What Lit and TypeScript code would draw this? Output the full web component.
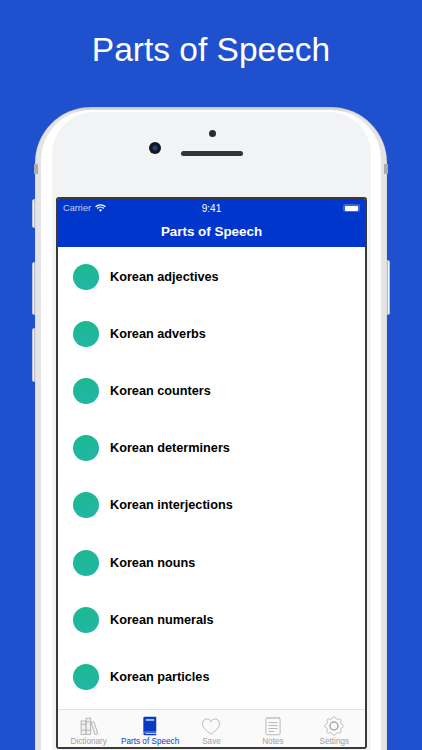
import { LitElement, html, css, svg } from "lit";
import { customElement } from "lit/decorators.js";

const ITEMS = ["adjectives", "adverbs", "counters", "determiners", "interjections", "nouns", "numerals", "particles"];

function gearPath(): string {
  const pts: string[] = [];
  for (let i = 0; i < 96; i++) {
    const a = (i / 96) * Math.PI * 2;
    const r = 10 + 1.3 * Math.cos(8 * a);
    pts.push(`${(12 + r * Math.cos(a)).toFixed(2)} ${(12 + r * Math.sin(a)).toFixed(2)}`);
  }
  return `M${pts.join("L")}z`;
}

const icons = {
  dict: svg`<g fill="#f1f1f1" stroke="#a9a9a9" stroke-width="1"><rect x="2.5" y="6" width="6" height="16"/><rect x="8.5" y="2.5" width="5.5" height="19.5"/><path d="M2.5 10h6M2.5 17h6M8.5 7h5.5M8.5 17h5.5"/><path d="M14.5 8l3.5-1 4.5 14-3.5 1.2z"/></g>`,
  book: svg`<path d="M4 2.5a1.5 1.5 0 0 1 1.5-1.5H19.5v18H6a2 2 0 0 0-2 1z" fill="#0a3ac4"/><rect x="7" y="4" width="10" height="1.5" fill="#fff"/><path d="M4 21c0-.9.9-1.4 2-1.4h13.5v1.2H6.4v.7h13.1V23H6c-1.2 0-2-.9-2-2z" fill="#0a3ac4"/>`,
  heart: svg`<path d="M12 22C6.5 17.5 1.6 14 1.6 9A5.4 5.4 0 0 1 12 7a5.4 5.4 0 0 1 10.4 2c0 5-4.900 8.500-10.400 13z" fill="none" stroke="#b0b0b0" stroke-width="1"/>`,
  notes: svg`<g fill="none" stroke="#a9a9a9" stroke-width="1"><rect x="3.500" y="2.500" width="17" height="20" rx="1.500"/><path d="M6.500 8h11M6.500 11.500h11M6.500 15h11M6.500 18.500h7"/><path d="M5 1v2M7.500 1v2M10 1v2M12.500 1v2M15 1v2M17.500 1v2M19.500 1v2" stroke-width=".7"/></g>`,
  gear: svg`<g fill="none" stroke="#a9a9a9"><path d="${gearPath()}" stroke-width=".9"/><circle cx="12" cy="12" r="4.800" stroke-width="1.800"/></g>`,
};

const TABS = [
  { label: "Dictionary", icon: icons.dict },
  { label: "Parts of Speech", icon: icons.book, active: true },
  { label: "Save", icon: icons.heart },
  { label: "Notes", icon: icons.notes },
  { label: "Settings", icon: icons.gear },
];

@customElement("app-root")
export class AppRoot extends LitElement {
  static styles = css`
    :host {
      display: block;
      width: 422px;
      height: 750px;
      overflow: hidden;
      background: #1f50ce;
      font-family: "Liberation Sans", Arial, sans-serif;
    }
    .headline {
      height: 107px;
      box-sizing: border-box;
      padding-top: 30px;
      margin: 0;
      text-align: center;
      color: #fff;
      font-size: 33.5px;
      line-height: 40px;
      font-weight: 400;
    }
    .phone {
      position: relative;
      width: 352px;
      height: 660px;
      margin-left: 35px;
      box-sizing: border-box;
      padding: 3px 6px 0;
      border-radius: 56px 56px 0 0;
      background: linear-gradient(#c9c9cc, #e4e4e7 5px);
      box-shadow: inset 0 0 1px #8f8f93;
    }
    .band {
      position: absolute;
      top: 57px;
      width: 4px;
      height: 10px;
      background: #a9abae;
    }
    .band.l { left: -1px; }
    .band.r { right: -1px; }
    .key {
      position: absolute;
      width: 3px;
      box-sizing: border-box;
      background: #f2f3f5;
      border: 1px solid #b9bfcf;
      border-radius: 2px 0 0 2px;
    }
    .key.mute { left: -3px; top: 92px; height: 29px; }
    .key.up { left: -3px; top: 155px; height: 53px; }
    .key.down { left: -3px; top: 221px; height: 54px; }
    .key.power { right: -3px; top: 153px; height: 55px; border-radius: 0 2px 2px 0; }
    .rim {
      height: 100%;
      box-sizing: border-box;
      padding: 2px 10px 0 11px;
      border-radius: 50px 50px 0 0;
      background: #fff;
    }
    .glass {
      height: 100%;
      box-sizing: border-box;
      padding: 0 3px 0 4px;
      border-radius: 42px 42px 0 0;
      background: #f2f3f5;
    }
    .face {
      height: 85px;
      position: relative;
      display: flex;
      flex-direction: column;
      align-items: center;
    }
    .sensor {
      width: 7px;
      height: 7px;
      border-radius: 50%;
      background: #2a2a2c;
      margin-top: 18px;
    }
    .speaker {
      width: 62px;
      height: 5px;
      margin-top: 14px;
      border-radius: 3px;
      background: #333436;
    }
    .camera {
      position: absolute;
      left: 93px;
      top: 30px;
      width: 12px;
      height: 12px;
      border-radius: 50%;
      background: radial-gradient(circle, #1d3f8c 0 2px, #14161c 3px);
    }
    .screen {
      width: 311px;
      height: 552px;
      box-sizing: border-box;
      border: 2px solid #3a3a3c;
      border-radius: 3px;
      background: #fff;
      display: flex;
      flex-direction: column;
      overflow: hidden;
    }
    .nav {
      height: 48px;
      flex: none;
      background: #0036cc;
      color: #fff;
    }
    .status {
      height: 18px;
      display: grid;
      grid-template-columns: 1fr auto 1fr;
      align-items: center;
      padding: 0 5px;
      font-size: 9.2px;
    }
    .carrier {
      display: flex;
      align-items: center;
      gap: 4px;
      color: #c3d0f3;
    }
    .time { font-size: 10px; }
    .battery {
      justify-self: end;
      display: flex;
      align-items: center;
      width: 17px;
      height: 8px;
      box-sizing: border-box;
      padding: 1.500px 2px;
      border-radius: 2px;
      background: #3f66d8;
    }
    .battery i { display: block; width: 100%; height: 100%; background: #fff; border-radius: 1px; }
    .title {
      text-align: center;
      font-size: 13.4px;
      font-weight: 700;
      line-height: 20px;
      margin-top: 5px;
    }
    .list {
      flex: 1;
      min-height: 0;
      overflow: hidden;
      padding-top: 1px;
    }
    .row {
      height: 57.2px;
      display: flex;
      align-items: center;
      gap: 11px;
      padding-left: 15px;
      color: #000;
      font-size: 12.7px;
      font-weight: 700;
    }
    .dot {
      width: 26px;
      height: 26px;
      border-radius: 50%;
      background: linear-gradient(170deg, #1cb98e, #22b5a9);
      flex: none;
    }
    .tabs {
      height: 38px;
      flex: none;
      box-sizing: border-box;
      display: grid;
      grid-template-columns: repeat(5, 1fr);
      background: #fafafa;
      border-top: 1px solid #e3e3e3;
    }
    .tab {
      display: flex;
      flex-direction: column;
      align-items: center;
      justify-content: flex-end;
      gap: 1px;
      color: #a0a0a0;
      font-size: 8.2px;
      padding-bottom: 1px;
      white-space: nowrap;
    }
    .tab.on { color: #0a3ac4; }
    .tab svg { width: 20px; height: 20px; display: block; }
  `;

  render() {
    return html`
      <h1 class="headline">Parts of Speech</h1>
      <div class="phone">
        <span class="band l"></span><span class="band r"></span>
        <span class="key mute"></span><span class="key up"></span>
        <span class="key down"></span><span class="key power"></span>
        <div class="rim">
          <div class="glass">
            <div class="face">
              <span class="sensor"></span>
              <span class="speaker"></span>
              <span class="camera"></span>
            </div>
            <div class="screen">
              <div class="nav">
                <div class="status">
                  <span class="carrier">Carrier
                    <svg width="11" height="8" viewBox="0 0 11 8" fill="none" stroke="#fff" stroke-width="1.300">
                      <path d="M.6 2.800a7 7 0 0 1 9.800 0M2.200 4.500a4.700 4.700 0 0 1 6.600 0"/>
                      <path d="M3.900 6.100a2.300 2.300 0 0 1 3.200 0L5.500 7.800z" fill="#fff" stroke="none"/>
                    </svg>
                  </span>
                  <span class="time">9:41</span>
                  <span class="battery"><i></i></span>
                </div>
                <div class="title">Parts of Speech</div>
              </div>
              <div class="list">
                ${ITEMS.map((i) => html`<div class="row"><span class="dot"></span><span>Korean ${i}</span></div>`)}
              </div>
              <div class="tabs">
                ${TABS.map((t) => html`<div class="tab ${t.active ? "on" : ""}">
                  <svg viewBox="0 0 24 24">${t.icon}</svg><span>${t.label}</span>
                </div>`)}
              </div>
            </div>
          </div>
        </div>
      </div>
    `;
  }
}
